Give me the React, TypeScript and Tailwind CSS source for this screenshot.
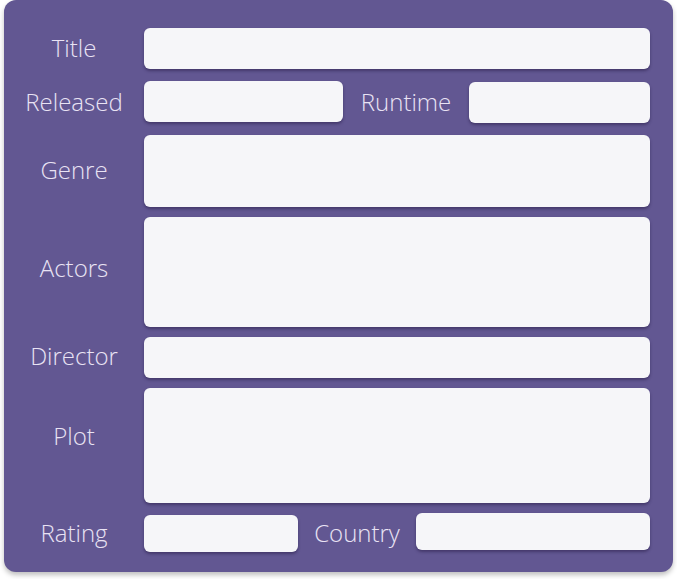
import React from 'react';

const inputCls = 'bg-[#f6f6f9] rounded-md shadow-[0_2px_3px_rgba(30,20,60,0.45)]';

const Label: React.FC<{ children: React.ReactNode; className?: string }> = ({ children, className = '' }) => (
  <span className={`text-[24px] font-light leading-none text-[#e9e3f4] ${className}`}>{children}</span>
);

const Row: React.FC<{ label: string; h: string; mt: string; shift?: string }> = ({ label, h, mt, shift = '' }) => (
  <div className={`flex items-center ${mt}`}>
    <div className={`w-[100px] flex justify-center mr-[20px] ${shift}`}>
      <Label>{label}</Label>
    </div>
    <div className={`flex-1 ${h} ${inputCls}`} />
  </div>
);

const App: React.FC = () => {
  return (
    <div className="w-[677px] h-[579px] bg-white px-[4px]" style={{ fontFamily: '"Open Sans", "Noto Sans", sans-serif' }}>
      <div className="bg-[#625792] rounded-xl pl-[20px] pr-[23px] pt-[28px] pb-[20px] shadow-[0_3px_5px_rgba(0,0,0,0.25)]">
        <Row label="Title" h="h-[41px]" mt="" shift="mb-[2px]" />

        <div className="flex h-[42px] mt-[12px]">
          <div className="w-[100px] flex items-center justify-center mr-[20px]">
            <Label>Released</Label>
          </div>
          <div className={`w-[199px] h-[41px] self-start ${inputCls}`} />
          <div className="w-[126px] flex items-center justify-center">
            <Label>Runtime</Label>
          </div>
          <div className={`flex-1 h-[41px] self-end ${inputCls}`} />
        </div>

        <Row label="Genre" h="h-[72px]" mt="mt-[12px]" shift="mb-[2px]" />
        <Row label="Actors" h="h-[110px]" mt="mt-[10px]" shift="mb-[8px]" />
        <Row label="Director" h="h-[41px]" mt="mt-[10px]" shift="mb-[4px]" />
        <Row label="Plot" h="h-[115px]" mt="mt-[10px]" shift="mb-[20px]" />

        <div className="flex h-[39px] mt-[10px]">
          <div className="w-[100px] flex items-center justify-center mr-[20px]">
            <Label>Rating</Label>
          </div>
          <div className={`w-[154px] h-[37px] self-end ${inputCls}`} />
          <div className="w-[118px] flex items-center justify-center">
            <Label>Country</Label>
          </div>
          <div className={`flex-1 h-[37px] self-start ${inputCls}`} />
        </div>
      </div>
    </div>
  );
};

export default App;
